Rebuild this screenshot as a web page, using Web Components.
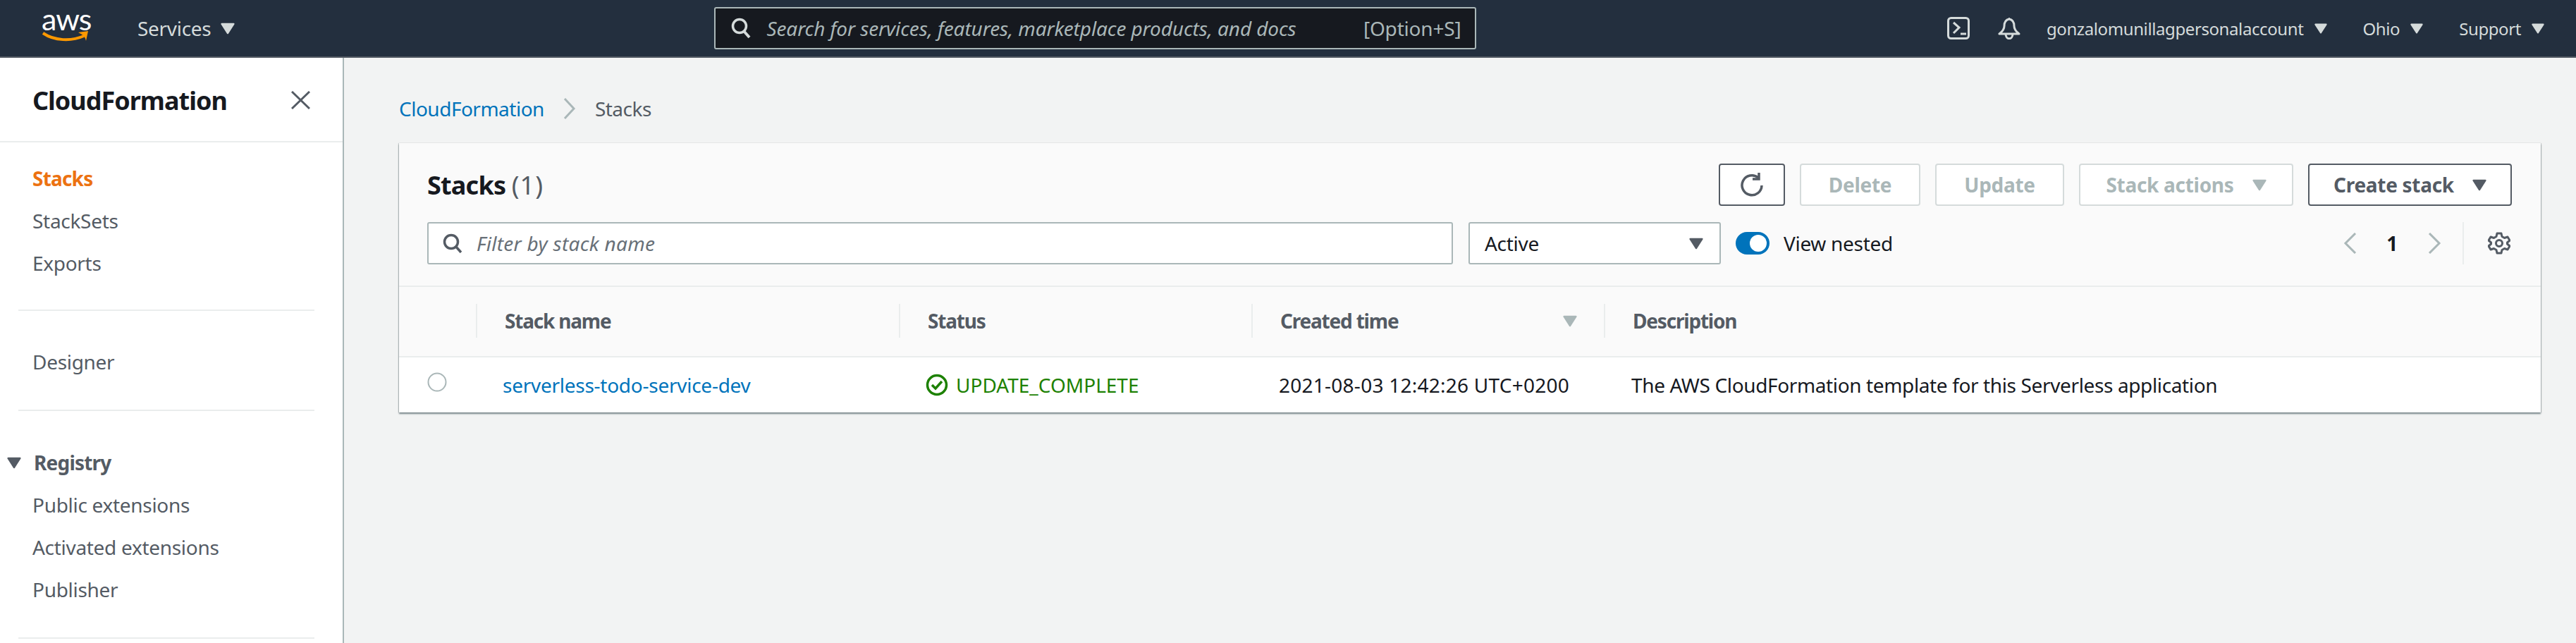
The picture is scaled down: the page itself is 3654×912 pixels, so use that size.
<!DOCTYPE html>
<html>
<head>
<meta charset="utf-8">
<title>CloudFormation Stacks</title>
<style>
html, body { margin: 0; height: 100%; overflow: hidden; }
body {
    font-family: "Noto Sans", "Open Sans", sans-serif;
    font-size: 28px;
    letter-spacing: -0.3px;
    color: #16191f;
    background: #f2f3f3;
    display: flex;
    flex-direction: column;
}
.page { display: flex; flex: 1; min-height: 0; }
</style>
</head>
<body>
<aws-topbar></aws-topbar>
<div class="page">
    <aws-sidenav></aws-sidenav>
    <aws-content>
        <aws-breadcrumb></aws-breadcrumb>
        <stacks-card></stacks-card>
    </aws-content>
</div>

<script>
const CARET = (color, w = 26, h = 21) => `<svg width="${w}" height="${h}" viewBox="0 0 26 21" style="display:block;flex:none"><polygon points="2,2 24,2 13,19" fill="${color}" stroke="${color}" stroke-width="3" stroke-linejoin="round"/></svg>`;

customElements.define("aws-topbar", class extends HTMLElement {
    connectedCallback() {
        this.attachShadow({mode: "open"}).innerHTML = `
<style>
:host {
    display: flex;
    flex: none;
    align-items: center;
    height: 80px;
    border-bottom: 2px solid #545b64;
    background: #232f3e;
    color: #d5dbdb;
    font-size: 24px;
    letter-spacing: -0.4px;
}
.logo { margin-left: 59px; width: 68px; height: 62px; flex: none; color: #fff; }
.logo span { display: block; font: 400 43px/36px Lato, sans-serif; text-align: center; letter-spacing: -1px; }
.logo svg { display: block; margin-top: -2px; }
.item { display: flex; align-items: center; flex: none; white-space: nowrap; }
.services { margin-left: 68px; font-size: 28px; gap: 14px; letter-spacing: -0.3px; }
.search {
    margin-left: 680px;
    width: 1081px;
    height: 60px;
    box-sizing: border-box;
    display: flex;
    align-items: center;
    background: #16191f;
    border: 2px solid #aab7b8;
    border-radius: 3px;
    padding: 0 20px 0 22px;
    font-size: 28px;
    letter-spacing: -0.2px;
}
.search em { margin-left: 22px; flex: 1; color: #aab7b8; letter-spacing: -0.1px; }
.search span { color: #aab7b8; }
.spacer { flex: 1; }
.terminal { margin-right: 40px; }
.bell { margin-right: 37px; }
.account { gap: 16px; }
.ohio { margin-left: 50px; gap: 15px; }
.support { margin-left: 51px; gap: 15px; margin-right: 45px; }
svg { flex: none; }
</style>
<div class="logo">
    <span>aws</span>
    <svg width="68" height="20" viewBox="0 0 68 20"><path d="M2 4C18 15 42 16 60 8" fill="none" stroke="#ff9900" stroke-width="4"/><path d="M52 3L66 1L63 15C62 10 60 7 52 3Z" fill="#ff9900"/></svg>
</div>
<div class="item services">Services ${CARET("#d5dbdb", 20, 17)}</div>
<div class="search">
    <svg width="28" height="30" viewBox="0 0 28 30"><circle cx="12" cy="12" r="9.500" fill="none" stroke="#d5dbdb" stroke-width="3.500"/><path d="M18 19L26 28" stroke="#d5dbdb" stroke-width="4"/></svg>
    <em>Search for services, features, marketplace products, and docs</em>
    <span>[Option+S]</span>
</div>
<div class="spacer"></div>
<svg class="terminal" width="32" height="32" viewBox="0 0 32 32" fill="none" stroke="#d5dbdb" stroke-width="3"><rect x="1.500" y="1.500" width="29" height="29" rx="4"/><path d="M9 8L17 15L9 23M19 24H27"/></svg>
<svg class="bell" width="32" height="32" viewBox="0 0 32 32" fill="none" stroke="#d5dbdb" stroke-width="3" stroke-linejoin="round"><path d="M16 3C11 4 9 8 9 13C9 18 6 21 2 24H30C26 21 23 18 23 13C23 8 21 4 16 3Z"/><path d="M11 24C11 33 21 33 21 24"/><circle cx="16" cy="2" r="1" fill="#d5dbdb" stroke="none"/></svg>
<div class="item account">gonzalomunillagpersonalaccount ${CARET("#d5dbdb", 18, 15)}</div>
<div class="item ohio">Ohio ${CARET("#d5dbdb", 18, 15)}</div>
<div class="item support">Support ${CARET("#d5dbdb", 18, 15)}</div>
`;
    }
});

customElements.define("aws-sidenav", class extends HTMLElement {
    connectedCallback() {
        this.attachShadow({mode: "open"}).innerHTML = `
<style>
:host {
    display: block;
    flex: none;
    width: 488px;
    box-sizing: border-box;
    background: #fff;
    border-right: 2px solid #aab7b8;
    color: #545b64;
    overflow: hidden;
}
header {
    height: 120px;
    box-sizing: border-box;
    display: flex;
    align-items: center;
    justify-content: space-between;
    padding: 2px 46px 0 46px;
    border-bottom: 2px solid #eaeded;
    font-size: 36px;
    font-weight: 700;
    letter-spacing: -1px;
    color: #16191f;
}
nav { padding-left: 46px; }
.link { height: 60px; line-height: 60px; }
.active { color: #ec7211; font-weight: 700; letter-spacing: -0.8px; }
.rule { height: 2px; background: #eaeded; margin: 0 40px 0 26px; }
.first { padding-top: 21px; padding-bottom: 36px; }
.designer { padding-top: 42px; padding-bottom: 38px; }
.group {
    display: flex;
    align-items: center;
    margin-top: 43px;
    padding-left: 10px;
    gap: 18px;
    height: 60px;
    font-weight: 700;
    letter-spacing: -0.8px;
}
.group-links { padding-bottom: 38px; }
</style>
<header>
    <span>CloudFormation</span>
    <svg width="27" height="26" viewBox="0 0 27 26" fill="none" stroke="#545b64" stroke-width="3"><path d="M1 1L26 25M26 1L1 25"/></svg>
</header>
<nav class="first">
    <div class="link active">Stacks</div>
    <div class="link">StackSets</div>
    <div class="link">Exports</div>
</nav>
<div class="rule"></div>
<nav class="designer"><div class="link">Designer</div></nav>
<div class="rule"></div>
<div class="group">${CARET("#545b64", 20, 17)}<span>Registry</span></div>
<nav class="group-links">
    <div class="link">Public extensions</div>
    <div class="link">Activated extensions</div>
    <div class="link">Publisher</div>
</nav>
<div class="rule"></div>
`;
    }
});

customElements.define("aws-content", class extends HTMLElement {
    connectedCallback() {
        this.attachShadow({mode: "open"}).innerHTML = `
<style>
:host { display: block; flex: 1; min-width: 0; padding: 0 50px 0 78px; }
</style>
<slot></slot>
`;
    }
});

customElements.define("aws-breadcrumb", class extends HTMLElement {
    connectedCallback() {
        this.attachShadow({mode: "open"}).innerHTML = `
<style>
:host { display: flex; align-items: center; height: 121px; box-sizing: border-box; padding-top: 22px; color: #545b64; letter-spacing: -0.5px; }
a { color: #0073bb; }
svg { margin: 0 27px; }
</style>
<a>CloudFormation</a>
<svg width="18" height="30" viewBox="0 0 18 30" fill="none" stroke="#aab7b8" stroke-width="3"><path d="M2 1L15 15L2 29"/></svg>
<span>Stacks</span>
`;
    }
});

customElements.define("aws-button", class extends HTMLElement {
    connectedCallback() {
        this.attachShadow({mode: "open"}).innerHTML = `
<style>
:host {
    display: flex;
    align-items: center;
    justify-content: center;
    gap: 26px;
    flex: none;
    height: 60px;
    box-sizing: border-box;
    background: #fff;
    border: 2px solid #545b64;
    border-radius: 4px;
    color: #545b64;
    font-weight: 700;
    white-space: nowrap;
}
:host([disabled]) { border-color: #d5dbdb; color: #aab7b8; }
</style>
<slot></slot>
`;
    }
});

customElements.define("stacks-card", class extends HTMLElement {
    connectedCallback() {
        this.attachShadow({mode: "open"}).innerHTML = `
<style>
:host {
    display: block;
    background: #fff;
    box-shadow: 0 2px 2px rgba(0,28,36,.5), 1px 0 1px rgba(0,28,36,.15), -1px 0 1px rgba(0,28,36,.15);
    height: 382px;
    overflow: hidden;
}
.head {
    background: #fafafa;
    height: 204px;
    box-sizing: border-box;
    padding: 29px 41px 0 40px;
    border-bottom: 2px solid #eaeded;
}
.row { display: flex; align-items: center; }
.title { flex: 1; font-size: 36px; font-weight: 700; letter-spacing: -0.8px; }
.title span { color: #545b64; font-weight: 400; letter-spacing: 1px; }
.actions { gap: 21px; }
.filters { margin-top: 23px; }
.filter {
    width: 1455px;
    height: 60px;
    box-sizing: border-box;
    display: flex;
    align-items: center;
    gap: 20px;
    padding-left: 20px;
    background: #fff;
    border: 2px solid #aab7b8;
    border-radius: 3px;
    color: #687078;
}
.filter em { letter-spacing: 0.3px; }
.select {
    margin-left: 22px;
    width: 358px;
    height: 60px;
    box-sizing: border-box;
    display: flex;
    align-items: center;
    justify-content: space-between;
    padding: 0 23px 0 21px;
    background: #fff;
    border: 2px solid #aab7b8;
    border-radius: 3px;
}
.toggle {
    margin-left: 21px;
    width: 48px;
    height: 32px;
    flex: none;
    border-radius: 16px;
    background: #0073bb;
    display: flex;
    justify-content: flex-end;
    align-items: center;
    padding-right: 4px;
    box-sizing: border-box;
}
.toggle i { width: 24px; height: 24px; border-radius: 50%; background: #fff; }
.nested { margin-left: 20px; flex: 1; white-space: nowrap; }
.pager { display: flex; align-items: center; height: 60px; margin-right: 2px; }
.pager b { margin: 0 42px 0 41px; font-weight: 700; }
.pager div { width: 2px; height: 60px; background: #eaeded; margin: 0 34px 0 30px; }
.columns { display: grid; grid-template-columns: 109px 600px 500px 500px 1fr; }
.thead { background: #fafafa; height: 98px; border-bottom: 2px solid #eaeded; color: #545b64; font-weight: 700; letter-spacing: -1.2px; }
.th { display: flex; align-items: center; height: 48px; margin-top: 24px; border-left: 2px solid #eaeded; padding-left: 39px; }
.th:first-child { border-left: 0; }
.th.sort { justify-content: space-between; padding-right: 38px; }
.td { display: flex; align-items: center; height: 76px; padding: 2px 0 0 40px; white-space: nowrap; box-sizing: border-box; }
.td:first-child { align-items: flex-start; padding-top: 0; }
.td:first-child svg { margin-top: 21px; }
.td a { color: #0073bb; margin-left: -2px; letter-spacing: -0.26px; }
.ok { color: #1d8102; gap: 11px; letter-spacing: 0; }
.ok svg { margin-left: -2px; }
.date { margin-left: -1px; letter-spacing: 0.25px; }
.desc { margin-left: -1px; letter-spacing: -0.37px; }
</style>
<div class="head">
    <div class="row">
        <div class="title">Stacks <span>(1)</span></div>
        <div class="row actions">
            <aws-button style="width:94px"><svg width="34" height="34" viewBox="0 0 34 34" fill="none" stroke="#545b64" stroke-width="3.500"><path d="M26 7A14 14 0 1 0 31 18"/><path d="M27 0V9H18"/></svg></aws-button>
            <aws-button disabled style="width:171px">Delete</aws-button>
            <aws-button disabled style="width:183px">Update</aws-button>
            <aws-button disabled style="width:304px">Stack actions ${CARET("#aab7b8", 20, 17)}</aws-button>
            <aws-button style="width:289px">Create stack ${CARET("#545b64", 20, 17)}</aws-button>
        </div>
    </div>
    <div class="row filters">
        <div class="filter">
            <svg width="28" height="28" viewBox="0 0 28 28" fill="none" stroke="#545b64" stroke-width="3.500"><circle cx="12" cy="12" r="9.500"/><path d="M18 18L26 27"/></svg>
            <em>Filter by stack name</em>
        </div>
        <div class="select"><span>Active</span>${CARET("#545b64", 20, 17)}</div>
        <div class="toggle"><i></i></div>
        <div class="nested">View nested</div>
        <div class="pager">
            <svg width="20" height="30" viewBox="0 0 20 30" fill="none" stroke="#aab7b8" stroke-width="3"><path d="M17 1L3 15L17 29"/></svg>
            <b>1</b>
            <svg width="20" height="30" viewBox="0 0 20 30" fill="none" stroke="#aab7b8" stroke-width="3"><path d="M3 1L17 15L3 29"/></svg>
            <div></div>
            <svg width="32" height="32" viewBox="0 0 32 32" fill="none" stroke="#545b64" stroke-width="3" stroke-linejoin="round"><circle cx="16" cy="16" r="4.500"/><path d="M13 2H19L20 6.500L23.500 8.500L28 7L31 12L27.500 15V17L31 20L28 25L23.500 23.500L20 25.500L19 30H13L12 25.500L8.500 23.500L4 25L1 20L4.500 17V15L1 12L4 7L8.500 8.500L12 6.500Z"/></svg>
        </div>
    </div>
</div>
<div class="columns thead">
    <div class="th"></div>
    <div class="th">Stack name</div>
    <div class="th">Status</div>
    <div class="th sort">Created time ${CARET("#aab7b8", 20, 17)}</div>
    <div class="th">Description</div>
</div>
<div class="columns">
    <div class="td"><svg width="28" height="28" viewBox="0 0 28 28"><circle cx="14" cy="14" r="12.500" fill="#fff" stroke="#aab7b8" stroke-width="2"/></svg></div>
    <div class="td"><a>serverless-todo-service-dev</a></div>
    <div class="td ok"><svg width="32" height="32" viewBox="0 0 32 32" fill="none" stroke="#1d8102" stroke-width="3.500"><circle cx="16" cy="16" r="13.500"/><path d="M9 16L14 21L23 11"/></svg>UPDATE_COMPLETE</div>
    <div class="td"><span class="date">2021-08-03 12:42:26 UTC+0200</span></div>
    <div class="td"><span class="desc">The AWS CloudFormation template for this Serverless application</span></div>
</div>
`;
    }
});
</script>
</body>
</html>
